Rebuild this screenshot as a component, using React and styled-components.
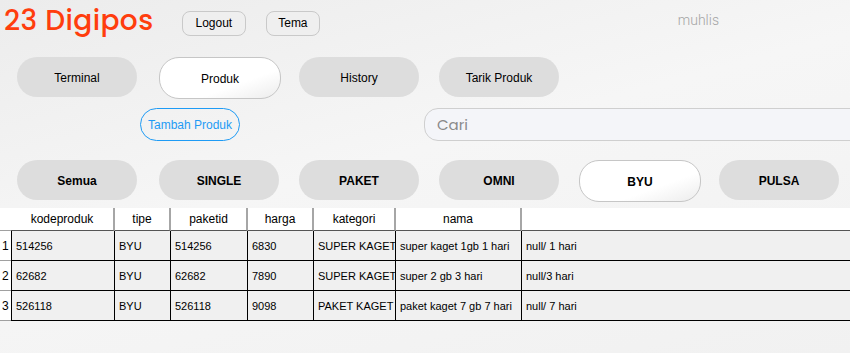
import React from 'react'
import styled, { createGlobalStyle } from 'styled-components'

const GlobalStyle = createGlobalStyle`
  html, body {
    margin: 0;
    padding: 0;
  }
  body {
    font-family: "Liberation Sans", Arial, sans-serif;
    background: linear-gradient(165deg, #ececec 0%, #f6f6f6 45%, #f1f1f1 100%);
    min-height: 353px;
    overflow: hidden;
  }
`

const navItems = ['Terminal', 'Produk', 'History', 'Tarik Produk']
const filters = ['Semua', 'SINGLE', 'PAKET', 'OMNI', 'BYU', 'PULSA']
const columns = ['kodeproduk', 'tipe', 'paketid', 'harga', 'kategori', 'nama', '']
const rows = [
  ['514256', 'BYU', '514256', '6830', 'SUPER KAGET', 'super kaget 1gb 1 hari', 'null/ 1 hari'],
  ['62682', 'BYU', '62682', '7890', 'SUPER KAGET', 'super 2 gb 3 hari', 'null/3 hari'],
  ['526118', 'BYU', '526118', '9098', 'PAKET KAGET', 'paket kaget 7 gb 7 hari', 'null/ 7 hari'],
]

export default function App() {
  return (
    <Page>
      <GlobalStyle />
      <TopBar>
        <Title>23 Digipos</Title>
        <SmallButton>Logout</SmallButton>
        <SmallButton narrow>Tema</SmallButton>
        <User>muhlis</User>
      </TopBar>

      <PillRow>
        {navItems.map(n => (
          <Pill key={n} active={n === 'Produk'}>{n}</Pill>
        ))}
      </PillRow>

      <ActionRow>
        <AddButton>Tambah Produk</AddButton>
        <Search placeholder="Cari" />
      </ActionRow>

      <FilterRow>
        {filters.map(f => (
          <Pill key={f} bold active={f === 'BYU'}>{f}</Pill>
        ))}
      </FilterRow>

      <Table>
        <Corner />
        {columns.map((c, i) => (
          <HeadCell key={i} last={i === columns.length - 1}>{c}</HeadCell>
        ))}
        {rows.map((r, ri) => (
          <React.Fragment key={ri}>
            <RowNum>{ri + 1}</RowNum>
            {r.map((v, ci) => (
              <Cell key={ci} first={ci === 0} last={ci === r.length - 1}>{v}</Cell>
            ))}
          </React.Fragment>
        ))}
      </Table>
    </Page>
  )
}

const Page = styled.div`
  width: 850px;
  height: 353px;
  display: flex;
  flex-direction: column;
  overflow: hidden;
`

const TopBar = styled.div`
  display: flex;
  align-items: center;
  height: 44px;
  padding: 0 131px 0 4px;
`

const Title = styled.h1`
  margin: 0 28px 0 0;
  font-family: Poppins, Inter, "Open Sans", sans-serif;
  font-weight: 500;
  font-size: 28px;
  letter-spacing: 0.4px;
  color: #ff3d0d;
  line-height: 1;
  position: relative;
  top: -1px;
`

const SmallButton = styled.button`
  flex: none;
  height: 25px;
  padding: 0 ${p => (p.narrow ? '11px' : '13px')};
  margin-right: 20px;
  border: 1px solid #c9c9c9;
  border-radius: 8px;
  background: #efefef;
  font-family: "Liberation Sans", Arial, sans-serif;
  font-size: 12px;
  color: #000;
  position: relative;
  top: 1px;
`

const User = styled.span`
  margin-left: auto;
  font-family: Roboto, "Open Sans", sans-serif;
  font-weight: 300;
  font-size: 14px;
  color: #a4a4a4;
  position: relative;
  top: -2px;
`

const PillRow = styled.div`
  display: flex;
  align-items: flex-start;
  gap: 20px;
  padding-left: 17px;
  margin-top: 13px;
  height: 42px;
`

const FilterRow = styled(PillRow)`
  margin-top: 19px;
`

const Pill = styled.button`
  flex: none;
  width: ${p => (p.active ? '122px' : '120px')};
  height: ${p => (p.active ? '42px' : '40px')};
  margin-right: ${p => (p.active ? '-2px' : '0')};
  border-radius: 20px;
  border: ${p => (p.active ? '1px solid #c6c6c6' : 'none')};
  background: ${p =>
    p.active ? 'linear-gradient(160deg, #ffffff 0%, #ffffff 65%, #ececec 100%)' : '#dddddd'};
  font-family: "Liberation Sans", Arial, sans-serif;
  font-size: 12px;
  font-weight: ${p => (p.bold ? 700 : 400)};
  color: #000;
  padding: 0;
  padding-top: ${p => (p.active ? '2px' : '1px')};
  &:first-child {
    margin-right: 2px;
  }
`

const ActionRow = styled.div`
  display: flex;
  align-items: center;
  padding-left: 140px;
  margin-top: 9px;
  height: 33px;
`

const AddButton = styled.button`
  flex: none;
  width: 100px;
  height: 33px;
  border: 1px solid #1e9bf5;
  border-radius: 17px;
  background: transparent;
  color: #1e9bf5;
  font-family: "Liberation Sans", Arial, sans-serif;
  font-size: 12px;
  padding: 0;
  white-space: nowrap;
`

const Search = styled.input`
  margin-left: 184px;
  width: 460px;
  flex: none;
  height: 33px;
  box-sizing: border-box;
  border: 1px solid #cfcfcf;
  border-radius: 14px;
  background: #f4f5f9;
  padding: 0 12px;
  font-family: Poppins, Inter, "Open Sans", sans-serif;
  font-size: 15px;
  outline: none;
  &::placeholder {
    color: #8a8a8a;
  }
`

const Table = styled.div`
  margin-top: 6px;
  display: grid;
  grid-template-columns: 11px 104px 56px 77px 66px 82px 126px 1fr;
  grid-auto-rows: 30px;
  grid-template-rows: 23px;
  font-family: "Liberation Sans", Arial, sans-serif;
  font-size: 11px;
  color: #000;
`

const Corner = styled.div`
  background: #fff;
  border-bottom: 1px solid #a0a0a0;
`

const HeadCell = styled.div`
  background: #fff;
  border-right: ${p => (p.last ? 'none' : '2px solid #a6a6a6')};
  border-bottom: 1px solid #555;
  display: flex;
  align-items: center;
  justify-content: center;
  font-size: 12px;
`

const RowNum = styled.div`
  background: #fff;
  border-bottom: 1px solid #a0a0a0;
  display: flex;
  align-items: center;
  padding-left: 2px;
  font-size: 12px;
`

const Cell = styled.div`
  background: #f0f0f0;
  border-right: ${p => (p.last ? 'none' : '1px solid #000')};
  border-bottom: 1px solid #000;
  border-left: ${p => (p.first ? '1px solid #000' : 'none')};
  display: flex;
  align-items: center;
  padding-left: 4px;
  white-space: nowrap;
  overflow: hidden;
`
